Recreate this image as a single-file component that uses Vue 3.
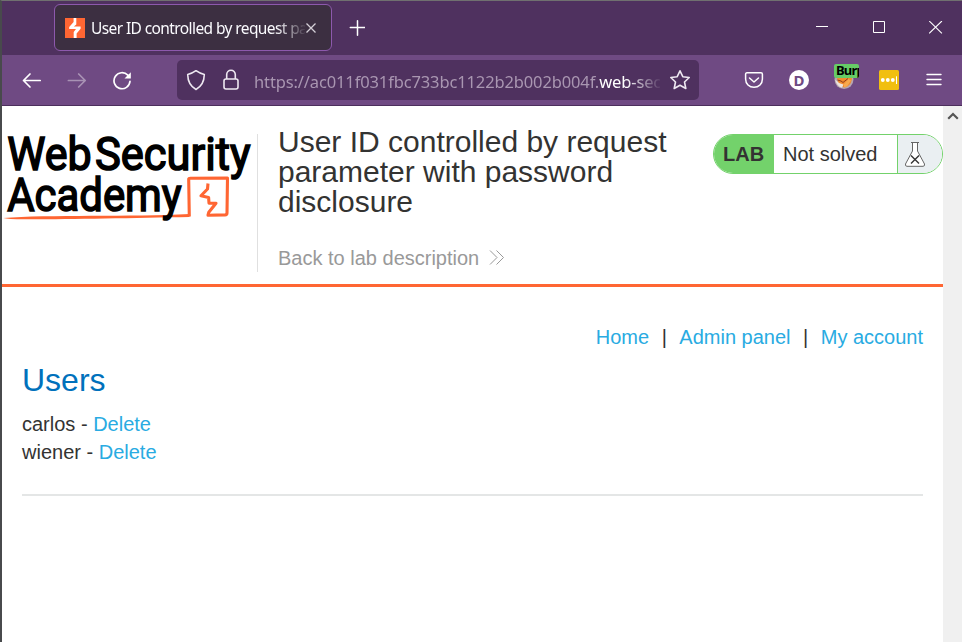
<script setup>
const users = ['carlos', 'wiener']
const links = ['Home', 'Admin panel', 'My account']
</script>

<template>
  <div class="window">
    <header class="tabbar">
      <div class="tab">
        <svg class="favicon" width="20" height="20" viewBox="0 0 20 20">
          <rect width="20" height="20" fill="#ff6633" />
          <path d="M8.6 0H11.3V6.6L8.9 8.6H15.6V10.8L11.6 15.6V20H8.7V14L11 11.1H4.2V8.9L8.6 3.9Z" fill="#fff" />
        </svg>
        <span class="tab-title">User ID controlled by request parameter</span>
        <svg class="tab-close" width="12" height="12" viewBox="0 0 12 12"><path d="M1.5 1.5L10.5 10.5M10.5 1.5L1.5 10.5" stroke="#d5d0d8" stroke-width="1.3" /></svg>
      </div>
      <svg class="plus" width="16" height="16" viewBox="0 0 16 16"><path d="M8.5 .8V15.2M1.3 7.5H15.7" stroke="#fff" stroke-width="1.5" stroke-linecap="round" /></svg>
      <div class="controls">
        <svg width="14" height="14" viewBox="0 0 14 14"><path d="M1 5.5H13" stroke="#fff" /></svg>
        <svg width="14" height="14" viewBox="0 0 14 14"><path d="M1.5 .5H12.5V11.5H1.5Z" stroke="#fff" fill="none" /></svg>
        <svg width="14" height="14" viewBox="0 0 14 14"><path d="M.2 0L12.9 12.4M12.9 0L.2 12.4" stroke="#fff" stroke-width="1.1" /></svg>
      </div>
    </header>

    <nav class="toolbar">
      <svg width="20" height="20" viewBox="0 0 20 20" class="nav-icon"><path d="M18.2 10.5H1.5M8 4L1.5 10.5L8 17" /></svg>
      <svg width="20" height="20" viewBox="0 0 20 20" class="nav-icon dim"><path d="M1.4 10.5H18.2M11.7 4L18.2 10.5L11.7 17" /></svg>
      <svg width="20" height="20" viewBox="0 0 20 20" class="nav-icon">
        <path d="M15.8 5.2A8 8 0 1 0 18 11.3" />
        <path d="M18.8 2.2V8.5H12.5Z" fill="#fff" stroke="none" />
      </svg>
      <div class="urlbar">
        <svg width="20" height="22" viewBox="0 0 20 22" class="url-icon"><path d="M10 1.7C12.7 3.6 15 4.7 18.3 5.6C18.2 12.4 16 17.3 10 20.5C4 17.3 1.8 12.4 1.7 5.6C5 4.7 7.3 3.6 10 1.7Z" /></svg>
        <svg width="18" height="22" viewBox="0 0 18 22" class="url-icon lock"><rect x="2" y="10" width="14" height="10" rx="2" /><path d="M4.7 10V5.5A4.3 4.3 0 0 1 13.3 5.5V10" /></svg>
        <div class="url">https://ac011f031fbc733bc1122b2b002b004f.<b>web-security</b></div>
        <svg width="22" height="22" viewBox="0 0 22 22" class="url-icon star"><path d="M11 1.8L13.8 7.7L20.2 8.5L15.5 13L16.8 19.5L11 16.3L5.2 19.5L6.5 13L1.8 8.5L8.2 7.7Z" /></svg>
      </div>
      <div class="extensions">
        <svg width="20" height="20" viewBox="0 0 20 20" class="nav-icon pocket"><path d="M3 2.8H17C18 2.8 18.4 3.3 18.4 4.3V9C18.4 13.8 14.8 17.3 10 17.3C5.2 17.3 1.6 13.8 1.6 9V4.3C1.6 3.3 2 2.8 3 2.8ZM5.5 8L10 12L14.5 8" /></svg>
        <span class="account">D</span>
        <span class="fox">
          <svg width="20" height="20" viewBox="0 0 20 20">
            <circle cx="10" cy="9.5" r="9.5" fill="#b5a5b0" />
            <path d="M3 7H18C18 13 15 16.5 10.5 17.5C6 16.5 3.5 13 3 7Z" fill="#f28b2c" />
            <path d="M1.2 9.5L5 13L9.5 14.5L8 17.8C4.5 16.8 1.8 13.5 1.2 9.5Z" fill="#ece2dc" />
            <path d="M10 14L14.5 9L17 10.5L13 16.5L10 17.5Z" fill="#f6a94e" />
            <path d="M3.5 10L7 11L9 12.5L14 8.5" stroke="#8e3f20" stroke-width="1" fill="none" />
          </svg>
          <span class="badge">Burp</span>
        </span>
        <svg width="20" height="20" viewBox="0 0 20 20"><rect width="20" height="20" rx="1.5" fill="#f1bf10" /><g fill="#fff"><circle cx="3.8" cy="10" r="1.9" /><circle cx="8.8" cy="10" r="1.9" /><circle cx="13.8" cy="10" r="1.9" /><rect x="17" y="6.3" width="1" height="7.7" /></g></svg>
        <svg class="menu" width="16" height="16" viewBox="0 0 16 16"><path d="M1 2.5H15M1 7.5H15M1 12.5H15" stroke="#fff" stroke-width="1.4" stroke-linecap="round" /></svg>
      </div>
    </nav>

    <div class="viewport">
      <main class="page">
        <section class="banner">
          <svg class="logo" width="255" height="110" viewBox="0 0 255 110">
            <g class="logo-text">
              <text x="5.2" y="43.6" textLength="84.5" lengthAdjust="spacingAndGlyphs">Web</text>
              <text x="93" y="43.6" textLength="155.5" lengthAdjust="spacingAndGlyphs">Security</text>
            </g>
            <path d="M1.3 92C45 88.5 130 91 187.5 88V91C130 92 60 93.5 22 93.3Q6 93.3 1.3 92Z" fill="#ff6633" />
            <path d="M187.3 90.5L186.7 53.5Q186.5 52.3 188.5 52.2L225.5 52L225 87Q225 88.8 223 88.9L206 89.2L206.8 86.2L214 77.3L207 77.2L206.6 71.4L199 69.8L205.5 63L206 57.5" fill="none" stroke="#ff6633" stroke-width="3.1" stroke-linejoin="round" />
            <g class="logo-text">
              <text x="5.2" y="84.6" textLength="174.5" lengthAdjust="spacingAndGlyphs">Academy</text>
            </g>
          </svg>
          <div class="intro">
            <h2>User ID controlled by request parameter with password disclosure</h2>
            <a class="back">Back to lab description
              <svg width="16" height="16" viewBox="0 0 16 16"><path d="M1 .5L8 7.5L1 14.5M7.5 .5L14.5 7.5L7.5 14.5" fill="none" stroke="#999" /></svg>
            </a>
          </div>
          <div class="status">
            <span class="lab">LAB</span>
            <span class="result">Not solved</span>
            <span class="flask">
              <svg width="22" height="26" viewBox="0 0 22 26"><path d="M7 1.5H15M8.5 2V10L1.5 23Q1 25.3 3 25.3H19Q21 25.3 20.5 23L13.5 10V2" fill="#fff" stroke="#666" /><path d="M7 14.5L15 22.5M15 14.5L7 22.5" stroke="#333" stroke-width="1.4" /></svg>
            </span>
          </div>
        </section>
        <section class="content">
          <div class="links">
            <template v-for="(link, i) in links" :key="link">
              <span v-if="i" class="sep">|</span><a>{{ link }}</a>
            </template>
          </div>
          <h1>Users</h1>
          <div v-for="user in users" :key="user" class="user">{{ user }} - <a>Delete</a></div>
          <hr />
        </section>
      </main>
      <aside class="scrollbar">
        <svg width="12" height="10" viewBox="0 0 12 10"><path d="M1.2 7.8L6 3L10.8 7.8" fill="none" stroke="#555" stroke-width="2.2" /></svg>
      </aside>
    </div>
  </div>
</template>

<style>
body { margin: 0; overflow: hidden; background: #fff; }
</style>

<style scoped>
* { box-sizing: border-box; }
svg { display: block; flex: none; }
.window {
  height: 642px;
  display: flex;
  flex-direction: column;
  border-top: 1px solid #707070;
  border-left: 2px solid #484a4c;
  font-family: "Liberation Sans", Arial, sans-serif;
  color: #333332;
}
.tabbar {
  height: 54px;
  flex: none;
  display: flex;
  align-items: center;
  padding: 0 19px 0 52px;
  background: #4f315f;
}
.tab {
  width: 278px;
  height: 47px;
  display: flex;
  align-items: center;
  margin-bottom: 1px;
  padding: 1px 14px 0 10px;
  border: 1px solid #8d59ad;
  border-radius: 6px;
  background: #3c2f41;
}
.tab-title {
  flex: 1;
  margin: 0 0 1px 6px;
  overflow: hidden;
  white-space: nowrap;
  font: 15.5px "Noto Sans", sans-serif;
  letter-spacing: -0.6px;
  color: #fbfbfe;
  mask-image: linear-gradient(to right, #000 185px, transparent 216px);
}
.plus { margin-left: 17px; }
.controls { margin-left: auto; display: flex; gap: 43px; }
.toolbar {
  height: 51px;
  flex: none;
  display: flex;
  align-items: center;
  padding: 0 20px 0 20px;
  gap: 25px;
  background: #6f4a83;
  border-bottom: 1px solid #4c2f5c;
}
.nav-icon { fill: none; stroke: #fff; stroke-width: 1.7; stroke-linecap: round; stroke-linejoin: round; }
.pocket { stroke-width: 1.5; }
.dim { opacity: 0.4; }
.urlbar {
  width: 522px;
  height: 40px;
  flex: none;
  margin-left: 20px;
  display: flex;
  align-items: center;
  padding: 0 8px 0 9px;
  border-radius: 5px;
  background: #4f315f;
}
.url-icon { fill: none; stroke: #eee8f1; stroke-width: 1.6; stroke-linejoin: round; }
.lock { margin-left: 16px; }
.url {
  flex: 1;
  margin: 2px 9px 0 14px;
  overflow: hidden;
  white-space: nowrap;
  font: 16.5px "Noto Sans", sans-serif;
  letter-spacing: -0.13px;
  color: #a996b1;
  mask-image: linear-gradient(to right, #000 372px, transparent 408px);
}
.url b { font-weight: 400; color: #fff; }
.extensions { flex: 1; display: flex; align-items: center; justify-content: space-between; margin-left: 20px; }
.menu { margin-left: 2px; }
.account {
  width: 20px;
  height: 20px;
  border-radius: 50%;
  background: #fff;
  color: #6f4a83;
  font: 700 15px/20px "Noto Sans", sans-serif;
  text-align: center;
}
.fox { position: relative; }
.badge {
  position: absolute;
  top: -6px;
  left: 0;
  width: 25px;
  height: 14px;
  padding-left: 2px;
  overflow: hidden;
  border-radius: 2px;
  background: #66cc66;
  color: #000;
  font: 700 13px/13px "Noto Sans", sans-serif;
  letter-spacing: -0.8px;
}
.viewport { flex: 1; display: flex; min-height: 0; }
.page { flex: 1; }
.scrollbar { width: 19px; padding: 5px 0 0 4px; background: #f0f0f0; }
.banner {
  height: 181px;
  display: flex;
  align-items: flex-start;
  padding-top: 28px;
  border-bottom: 3px solid #ff6633;
}
.logo { margin-top: -8px; }
.logo-text { font: 400 47px Roboto, sans-serif; fill: #000; stroke: #000; stroke-width: 1.6; }
.intro { width: 435px; height: 138px; padding: 0 0 0 20px; border-left: 1px solid #e0e0e0; }
h2 { width: 410px; margin: -7px 0 0; font-size: 30px; line-height: 30px; font-weight: 400; }
.back { display: flex; align-items: center; gap: 10px; margin-top: 29px; font-size: 20px; line-height: 24px; color: #999; }
.status {
  width: 230px;
  height: 40px;
  margin-left: 21px;
  display: flex;
  border: 1px solid #73d26b;
  border-radius: 20px;
  overflow: hidden;
  font-size: 20px;
  line-height: 38px;
}
.lab { width: 60px; padding-left: 9px; background: #73d26b; font-weight: 700; }
.result { flex: 1; padding-left: 9px; }
.flask { width: 45px; padding: 6px 0 0 6px; border-left: 1px solid #73d26b; background: #eaeff2; }
.content { padding: 38px 20px 0; font-size: 20px; }
.links { display: flex; justify-content: flex-end; line-height: 24px; }
.sep { margin: 0 12.5px; }
a { color: #29abe2; }
a.back { color: #999; }
h1 { margin: 12px 0 11px; font-size: 32px; line-height: 38px; font-weight: 400; color: #0071bc; }
.user { line-height: 28px; }
hr { height: 2px; margin: 28px 0 0; border: 0; background: #e4e6e6; }
</style>
